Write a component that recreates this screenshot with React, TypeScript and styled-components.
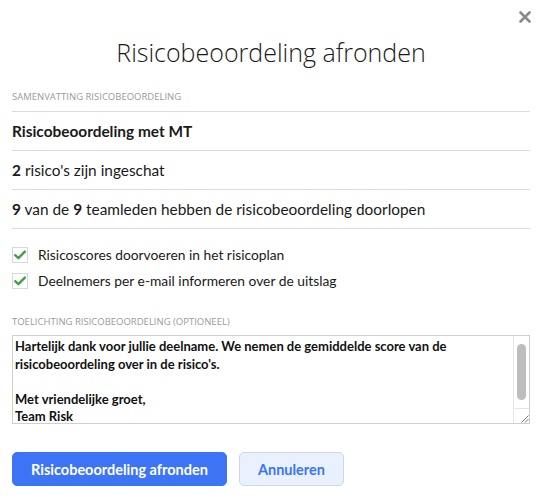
import React from 'react';
import styled, { createGlobalStyle } from 'styled-components';

const GlobalStyle = createGlobalStyle`
  html, body {
    margin: 0;
    padding: 0;
    background: #ffffff;
  }
  body {
    font-family: 'Lato', 'Open Sans', sans-serif;
    color: #1a1a1a;
  }
  * {
    box-sizing: border-box;
  }
`;

const Modal = styled.div`
  position: relative;
  width: 542px;
  height: 501px;
  padding: 0 12px;
  background: #ffffff;
`;

const CloseButton = styled.button`
  position: absolute;
  top: 10px;
  right: 10px;
  width: 14px;
  height: 14px;
  padding: 0;
  border: none;
  background: transparent;
  cursor: pointer;
  display: flex;
  align-items: center;
  justify-content: center;
`;

const Title = styled.h2`
  margin: 0;
  padding-top: 36px;
  font-family: 'Open Sans', sans-serif;
  font-weight: 300;
  font-size: 25px;
  line-height: 32px;
  text-align: center;
  color: #1a1a1a;
`;

const SectionLabel = styled.div<{ $top: number }>`
  font-family: 'Open Sans', sans-serif;
  font-size: 9.5px;
  line-height: 14px;
  text-transform: uppercase;
  color: #9a9a9a;
  margin-top: ${({ $top }) => $top}px;
`;

const SummaryList = styled.div`
  margin-top: 7px;
  border-top: 1px solid #dcdcdc;
  display: flex;
  flex-direction: column;
`;

const SummaryRow = styled.div<{ $strong?: boolean }>`
  height: 39px;
  display: flex;
  align-items: center;
  border-bottom: 1px solid #dcdcdc;
  font-size: 15.4px;
  font-weight: ${({ $strong }) => ($strong ? 700 : 400)};
  color: #1a1a1a;

  b {
    font-weight: 700;
  }
`;

const Options = styled.div`
  margin-top: 18px;
  display: flex;
  flex-direction: column;
  gap: 10px;
`;

const OptionRow = styled.label`
  display: flex;
  align-items: center;
  gap: 10px;
  font-size: 13.8px;
  line-height: 16px;
  color: #1a1a1a;
  cursor: pointer;
`;

const CheckBox = styled.span`
  width: 16px;
  height: 16px;
  border: 1px solid #d9d9d9;
  display: flex;
  align-items: center;
  justify-content: center;
  flex-shrink: 0;
`;

const NoteBox = styled.div`
  margin-top: 6px;
  height: 89px;
  display: flex;
  border: 1px solid #cfcfcf;
  background: #ffffff;
`;

const NoteArea = styled.textarea`
  flex: 1;
  min-width: 0;
  height: 100%;
  margin: 0;
  padding: 2px 2px;
  border: none;
  font-family: 'Lato', sans-serif;
  font-size: 13px;
  font-weight: 700;
  line-height: 17.5px;
  color: #111111;
  resize: none;
  outline: none;
  overflow: hidden;
`;

const ScrollColumn = styled.div`
  width: 16px;
  display: flex;
  flex-direction: column;
  border-left: 1px solid #e6e6e6;
`;

const ScrollTrack = styled.div`
  flex: 1;
  padding: 8px 3px 7px 3px;
`;

const ScrollThumb = styled.div`
  height: 56px;
  border-radius: 5px;
  background: #bdbdbd;
`;

const ResizeCorner = styled.div`
  height: 15px;
  border-top: 1px solid #e6e6e6;
  display: flex;
  align-items: flex-end;
  justify-content: flex-end;
`;

const Actions = styled.div`
  margin-top: 28px;
  display: flex;
  gap: 12px;
`;

const Button = styled.button<{ $variant: 'primary' | 'secondary' }>`
  height: 34px;
  padding: 0 18px;
  border-radius: 5px;
  font-family: 'Lato', sans-serif;
  font-size: 14.5px;
  font-weight: 700;
  cursor: pointer;
  border: 1px solid ${({ $variant }) => ($variant === 'primary' ? '#3d74f5' : '#cfd6df')};
  background: ${({ $variant }) => ($variant === 'primary' ? '#3d74f5' : '#e8f1fd')};
  color: ${({ $variant }) => ($variant === 'primary' ? '#ffffff' : '#3d74f5')};
`;

const Check = () => (
  <svg width="12" height="10" viewBox="0 0 12 10">
    <path d="M1.2 5.2 L4.4 8.2 L10.8 1.6" fill="none" stroke="#43a047" strokeWidth="2.4" strokeLinecap="round" strokeLinejoin="round" />
  </svg>
);

const noteText = `Hartelijk dank voor jullie deelname. We nemen de gemiddelde score van de risicobeoordeling over in de risico's.

Met vriendelijke groet,
Team Risk`;

export default function App() {
  return (
    <>
      <GlobalStyle />
      <Modal>
        <CloseButton aria-label="Sluiten">
          <svg width="12" height="12" viewBox="0 0 12 12">
            <path d="M1.5 1.5 L10.5 10.5 M10.5 1.5 L1.5 10.5" stroke="#8a8a8a" strokeWidth="2.6" strokeLinecap="round" />
          </svg>
        </CloseButton>
        <Title>Risicobeoordeling afronden</Title>

        <SectionLabel $top={22}>Samenvatting risicobeoordeling</SectionLabel>
        <SummaryList>
          <SummaryRow $strong>Risicobeoordeling met MT</SummaryRow>
          <SummaryRow>
            <span>
              <b>2</b> risico's zijn ingeschat
            </span>
          </SummaryRow>
          <SummaryRow>
            <span>
              <b>9</b> van de <b>9</b> teamleden hebben de risicobeoordeling doorlopen
            </span>
          </SummaryRow>
        </SummaryList>

        <Options>
          <OptionRow>
            <CheckBox>
              <Check />
            </CheckBox>
            Risicoscores doorvoeren in het risicoplan
          </OptionRow>
          <OptionRow>
            <CheckBox>
              <Check />
            </CheckBox>
            Deelnemers per e-mail informeren over de uitslag
          </OptionRow>
        </Options>

        <SectionLabel $top={26}>Toelichting risicobeoordeling (optioneel)</SectionLabel>
        <NoteBox>
          <NoteArea defaultValue={noteText} />
          <ScrollColumn>
            <ScrollTrack>
              <ScrollThumb />
            </ScrollTrack>
            <ResizeCorner>
              <svg width="9" height="9" viewBox="0 0 9 9">
                <path d="M8.5 1.5 L1.5 8.5 M8.5 5 L5 8.5" stroke="#777" strokeWidth="1" />
              </svg>
            </ResizeCorner>
          </ScrollColumn>
        </NoteBox>

        <Actions>
          <Button $variant="primary">Risicobeoordeling afronden</Button>
          <Button $variant="secondary">Annuleren</Button>
        </Actions>
      </Modal>
    </>
  );
}
